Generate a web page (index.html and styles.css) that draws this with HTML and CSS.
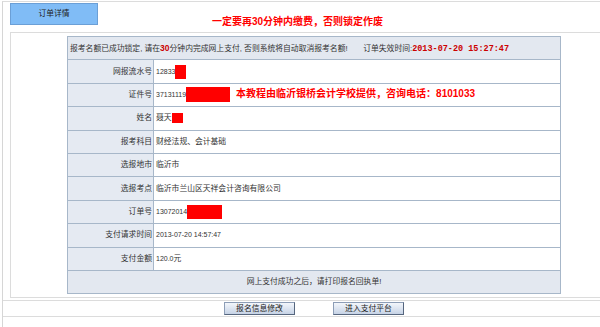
FILE: index.html
```html
<!DOCTYPE html>
<html>
<head>
    <meta charset="utf-8">
    <title>订单详情</title>
    <link rel="stylesheet" href="styles.css">
</head>
<body>
    <div class="page">
        <div class="top-bar">
            <div class="tab">订单详情</div>
            <div class="warn-title">一定要再30分钟内缴费，否则锁定作废</div>
        </div>

        <div class="panel">
            <table class="order-table">
                <colgroup>
                    <col class="col-label">
                    <col>
                </colgroup>
                <tr class="head-row">
                    <td colspan="2">报考名额已成功锁定, 请在<b class="hot">30</b>分钟内完成网上支付, 否则系统将自动取消报考名额!　　订单失效时间:<span class="deadline">2013-07-20 15:27:47</span></td>
                </tr>
                <tr>
                    <th>网报流水号</th>
                    <td><span class="num">12833</span><span class="mask mask-sn"></span></td>
                </tr>
                <tr>
                    <th>证件号</th>
                    <td><span class="num">37131119</span><span class="mask mask-id"></span><span class="ad">本教程由临沂银桥会计学校提供，咨询电话：8101033</span></td>
                </tr>
                <tr>
                    <th>姓名</th>
                    <td>聂天<span class="mask mask-name"></span></td>
                </tr>
                <tr>
                    <th>报考科目</th>
                    <td>财经法规、会计基础</td>
                </tr>
                <tr>
                    <th>选报地市</th>
                    <td>临沂市</td>
                </tr>
                <tr>
                    <th>选报考点</th>
                    <td>临沂市兰山区天祥会计咨询有限公司</td>
                </tr>
                <tr>
                    <th>订单号</th>
                    <td><span class="num">13072014</span><span class="mask mask-order"></span></td>
                </tr>
                <tr>
                    <th>支付请求时间</th>
                    <td><span class="num">2013-07-20 14:57:47</span></td>
                </tr>
                <tr>
                    <th>支付金额</th>
                    <td><span class="num">120.0</span>元</td>
                </tr>
                <tr class="foot-row">
                    <td colspan="2">网上支付成功之后，请打印报名回执单!</td>
                </tr>
            </table>
        </div>

        <div class="actions">
            <button class="btn">报名信息修改</button>
            <button class="btn">进入支付平台</button>
        </div>
    </div>
</body>
</html>
```

FILE: styles.css
```css
body {
    margin: 0;
    background: #fff;
    color: #333;
    font-family: "Liberation Sans", "Noto Sans CJK SC", sans-serif;
    font-size: 7.8px;
    overflow: hidden;
}
.page {
    width: 640px;
    height: 340px;
    margin: 1px 0 0 2px;
    border-top: 1px solid #dcdcdc;
    border-left: 1px solid #d6d6d6;
}
.top-bar {
    display: flex;
    align-items: flex-start;
    height: 30px;
    padding-left: 7px;
}
.tab {
    width: 86px;
    height: 20px;
    margin-top: 1px;
    line-height: 20px;
    text-align: center;
    background: #80bcf6;
    border: 1px solid #6b9fd6;
    color: #222;
}
.warn-title {
    margin: 14px 0 0 114px;
    color: #f00;
    font-size: 10px;
    font-weight: bold;
    line-height: 12px;
}
.panel {
    margin-left: 7px;
    padding: 3px 0 3px 56px;
    border: 1px solid #dcdcdc;
}
.order-table {
    width: 494px;
    border-collapse: collapse;
    table-layout: fixed;
}
.col-label {
    width: 86px;
}
.order-table tr {
    height: 23.4px;
}
.order-table th,
.order-table td {
    border: 1px solid #a7b7c9;
    padding: 0 2px;
    font-weight: normal;
    white-space: nowrap;
    line-height: 12px;
}
.order-table th {
    padding-right: 1px;
    text-align: right;
    background: #e5eaf2;
}
.order-table td {
    text-align: left;
}
.head-row td,
.foot-row td {
    background: #e3e8f0;
}
.foot-row td {
    text-align: center;
}
.hot {
    color: #c00;
    font-size: 8.5px;
}
.deadline {
    color: #c00;
    font-family: "Liberation Mono", monospace;
    font-weight: bold;
    font-size: 8.5px;
}
.num {
    font-size: 7px;
}
.mask {
    display: inline-block;
    vertical-align: middle;
    background: #f00;
}
.mask-sn { width: 11px; height: 14px; }
.mask-id { width: 44px; height: 15px; }
.mask-name { width: 11px; height: 10px; }
.mask-order { width: 35px; height: 14px; }
.ad {
    margin-left: 6px;
    color: #f00;
    font-size: 10px;
    font-weight: bold;
}
.actions {
    display: flex;
    gap: 38px;
    height: 15px;
    margin-top: 2px;
    padding-left: 221px;
    border-top: 1px solid #dcdcdc;
    border-bottom: 1px solid #dcdcdc;
}
.btn {
    width: 71px;
    height: 13px;
    margin-top: 1px;
    padding: 0;
    font-family: inherit;
    font-size: 7.8px;
    line-height: 11px;
    color: #222;
    background: linear-gradient(#f3f6fb, #c6d3e6);
    border: 1px solid;
    border-color: #8c9db6 #56667e #56667e #8c9db6;
}
```
